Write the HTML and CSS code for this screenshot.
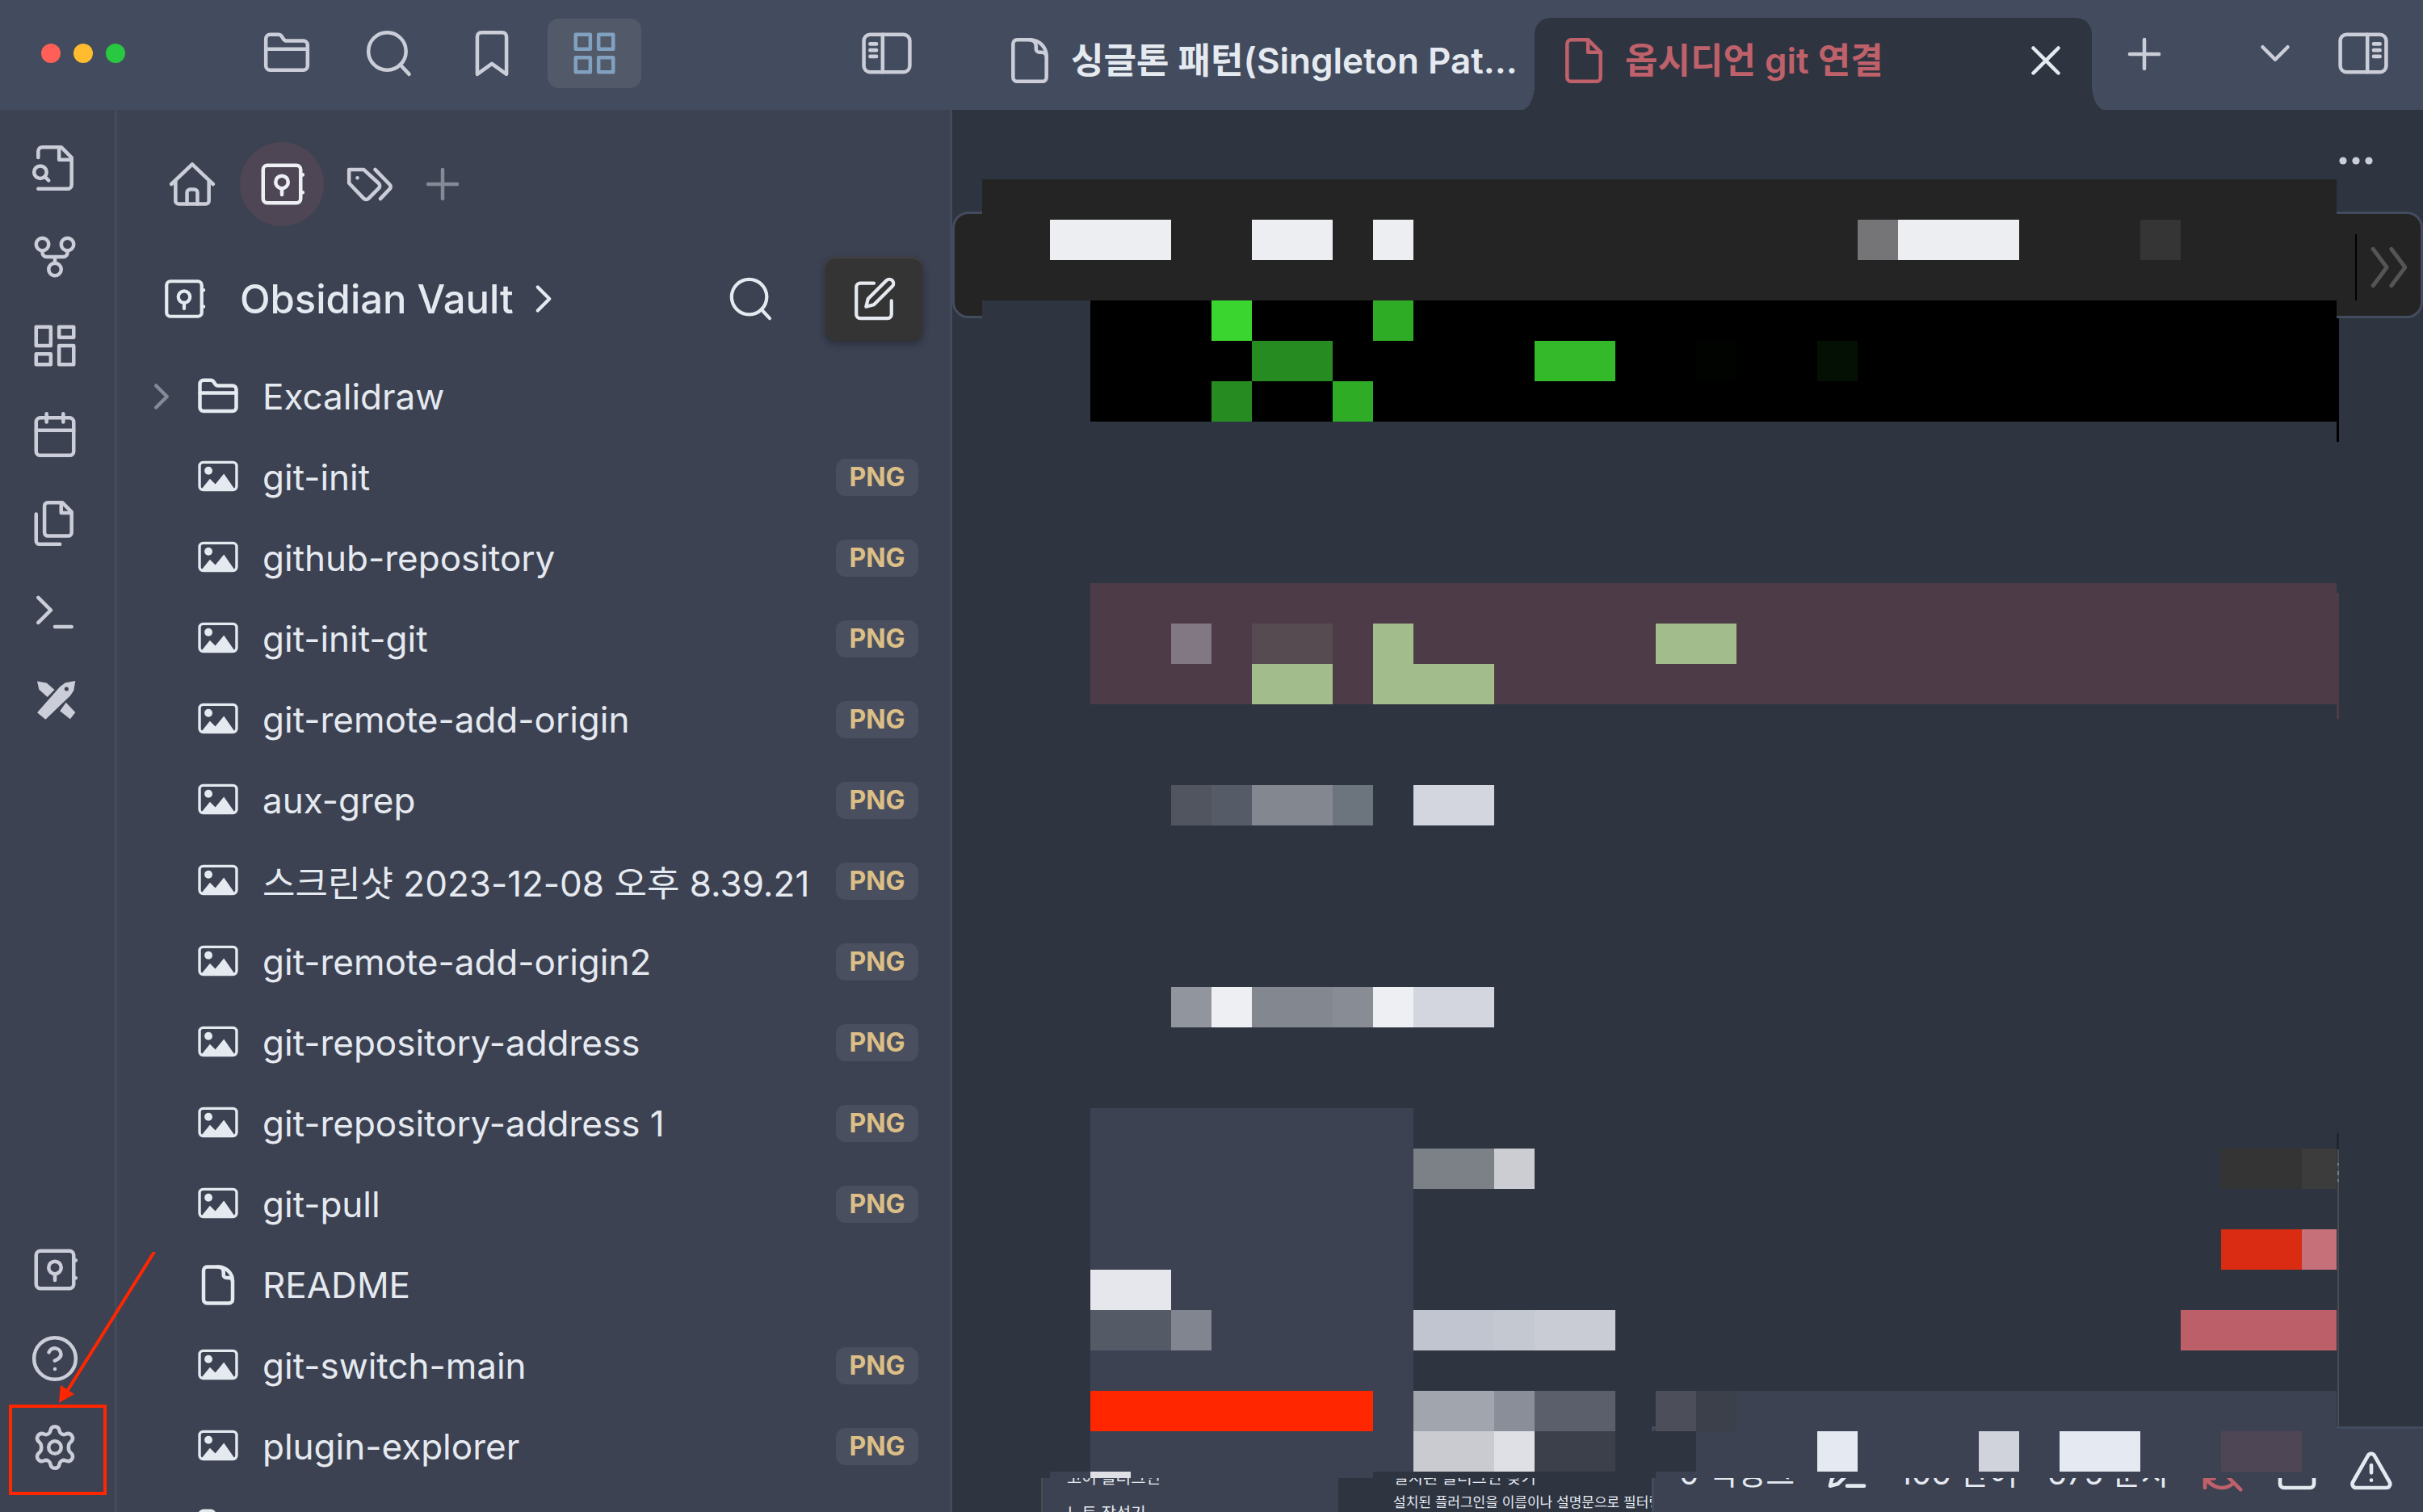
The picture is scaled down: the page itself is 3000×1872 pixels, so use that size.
FILE: index.html
```html
<!DOCTYPE html>
<html lang="ko">
    <head>
        <meta charset="utf-8">
        <meta name="viewport" content="width=device-width, initial-scale=1.0">
        <title>옵시디언 git 연결 - Obsidian Vault</title>
        <link rel="stylesheet" href="styles.css">
    </head>
    <body>
        <svg class="defs" aria-hidden="true">
            <symbol id="i-folder" viewBox="0 0 24 24"><path d="M4 20h16a2 2 0 0 0 2-2V8a2 2 0 0 0-2-2h-7.9a2 2 0 0 1-1.7-.9L9.600 3.900A2 2 0 0 0 7.900 3H4a2 2 0 0 0-2 2v13c0 1.100.9 2 2 2Z"/><path d="M2 10h20"/></symbol>
            <symbol id="i-search" viewBox="0 0 24 24"><circle cx="11" cy="11" r="9"/><path d="m21.500 22-4.300-4.600"/></symbol>
            <symbol id="i-bookmark" viewBox="0 0 24 24"><path d="m19 22-7-5-7 5V4a2 2 0 0 1 2-2h10a2 2 0 0 1 2 2z"/></symbol>
            <symbol id="i-grid" viewBox="0 0 24 24"><path d="M3 3h7v7H3zM14 3h7v7h-7zM14 14h7v7h-7zM3 14h7v7H3z"/></symbol>
            <symbol id="i-panel-left" viewBox="0 0 24 24"><rect x="1" y="3" width="22" height="18" rx="3"/><path d="M10 3v18M4 7.500h3M4 10.500h3M4 13.500h3"/></symbol>
            <symbol id="i-panel-right" viewBox="0 0 24 24"><rect x="1" y="3" width="22" height="18" rx="3"/><path d="M14 3v18M17 7.500h3M17 10.500h3M17 13.500h3"/></symbol>
            <symbol id="i-file" viewBox="0 0 24 24"><path d="M14 2H6a2 2 0 0 0-2 2v16a2 2 0 0 0 2 2h12a2 2 0 0 0 2-2V8z"/><path d="M14 2v6h6"/></symbol>
            <symbol id="i-file-round" viewBox="0 0 24 24"><path d="M12 2H6a2 2 0 0 0-2 2v16a2 2 0 0 0 2 2h12a2 2 0 0 0 2-2V10c0-4.500-3.500-8-8-8z"/><path d="M12 2c1.700 0 3 1.300 3 3v1.500c0 .8.700 1.500 1.500 1.500h1.200c1.300 0 2.300 1 2.300 2"/></symbol>
            <symbol id="i-x" viewBox="0 0 24 24"><path d="M18 6 6 18M6 6l12 12"/></symbol>
            <symbol id="i-plus" viewBox="0 0 24 24"><path d="M5 12h14M12 5v14"/></symbol>
            <symbol id="i-down" viewBox="0 0 24 24"><path d="m6 9 6 6 6-6"/></symbol>
            <symbol id="i-right" viewBox="0 0 24 24"><path d="m9 18 6-6-6-6"/></symbol>
            <symbol id="i-rights" viewBox="0 0 24 24"><path d="m5 20 6-8-6-8M13 20l6-8-6-8"/></symbol>
            <symbol id="i-more" viewBox="0 0 24 24"><g fill="currentColor" stroke="none"><circle cx="4" cy="12" r="2.300"/><circle cx="12" cy="12" r="2.300"/><circle cx="20" cy="12" r="2.300"/></g></symbol>
            <symbol id="i-file-search" viewBox="0 0 24 24"><path d="M4 22h14a2 2 0 0 0 2-2V7l-5-5H6a2 2 0 0 0-2 2v3"/><path d="M14 2v6h6"/><circle cx="5" cy="14" r="3"/><path d="m9 18-1.500-1.500"/></symbol>
            <symbol id="i-fork" viewBox="0 0 24 24"><circle cx="12" cy="18" r="3"/><circle cx="6" cy="6" r="3"/><circle cx="18" cy="6" r="3"/><path d="M18 9v1c0 1.100-.9 2-2 2H8a2 2 0 0 1-2-2V9M12 12v3"/></symbol>
            <symbol id="i-dashboard" viewBox="0 0 24 24"><path d="M3 3h7v9H3zM14 3h7v5h-7zM14 12h7v9h-7zM3 16h7v5H3z"/></symbol>
            <symbol id="i-calendar" viewBox="0 0 24 24"><rect x="3" y="4" width="18" height="18" rx="2"/><path d="M16 2v4M8 2v4M3 10h18"/></symbol>
            <symbol id="i-files" viewBox="0 0 24 24"><path d="M15.500 2H8.600a1.600 1.600 0 0 0-1.600 1.600v12.800a1.600 1.600 0 0 0 1.600 1.600h9.800a1.600 1.600 0 0 0 1.600-1.600V6.500z"/><path d="M3 7.600v12.800A1.600 1.600 0 0 0 4.600 22h9.800M15 2v5h5"/></symbol>
            <symbol id="i-terminal" viewBox="0 0 24 24"><path d="m4 17 6-6-6-6M12 19h8"/></symbol>
            <symbol id="i-excalidraw" viewBox="0 0 24 24"><g fill="currentColor" stroke="none"><path d="M3.500 2.500 8 3.300l3.800 3.300-3.400 3.500-4-3.600z"/><path d="m17.300 12.700 4.500 4.700-2.500 3.200-4.900-3.900z"/><path fill-rule="evenodd" d="M21.800 2.300 21 7l-1.600 2.400L7.500 20.800 3.500 17.500 14.500 5l2.500-1.800zM17.500 5.200a1 1 0 1 0 .1 2 1 1 0 0 0-.1-2z"/></g></symbol>
            <symbol id="i-vault" viewBox="0 0 24 24"><rect x="3" y="3" width="18" height="18" rx="2"/><circle cx="12" cy="11" r="3"/><path d="M12 14v3M21 7.500h1M21 16h1"/></symbol>
            <symbol id="i-help" viewBox="0 0 24 24"><circle cx="12" cy="12" r="10"/><path d="M9.100 9a3 3 0 0 1 5.800 1c0 2-3 3-3 3M12 17h.01"/></symbol>
            <symbol id="i-settings" viewBox="0 0 24 24"><circle cx="12" cy="12" r="3"/><path d="M9.800 4.100C10 2.900 10.800 2 12 2s2 .9 2.200 2.100c.2 1.300 1.600 2.100 2.800 1.600 1.100-.5 2.400-.4 3.200.8.700 1.200.1 2.300-.8 3.100-1.200.9-1.200 3.900 0 4.800.9.700 1.500 1.900.8 3.100-.8 1.200-2.100 1.300-3.200.8-1.200-.5-2.600.3-2.800 1.600C14 21.100 13.200 22 12 22s-2-.9-2.200-2.100c-.2-1.300-1.600-2.100-2.800-1.600-1.100.5-2.400.4-3.200-.8-.7-1.200-.1-2.400.8-3.100 1.200-.9 1.200-3.900 0-4.800-.9-.8-1.500-1.900-.8-3.100.8-1.200 2.100-1.300 3.200-.8 1.200.5 2.600-.3 2.800-1.600z"/></symbol>
            <symbol id="i-home" viewBox="0 0 24 24"><path d="M2 12 12 2.500 22 12"/><path d="M4 10.500V20a1.500 1.500 0 0 0 1.500 1.500h13A1.500 1.500 0 0 0 20 20v-9.500"/><path d="M9.500 21.500V16a1.500 1.500 0 0 1 1.500-1.500h2a1.500 1.500 0 0 1 1.500 1.500v5.500"/></symbol>
            <symbol id="i-tags" viewBox="0 0 24 24"><path d="M2 5v6.500l7 7.300c.7.700 1.700.7 2.400 0l4.800-4.800c.7-.7.700-1.700 0-2.400L9 5z"/><path d="m14.500 5 7 7.200c.6.600.6 1.500 0 2.100L17 19M6 9h.01"/></symbol>
            <symbol id="i-edit" viewBox="0 0 24 24"><path d="M12 4H5a2 2 0 0 0-2 2v14a2 2 0 0 0 2 2h14a2 2 0 0 0 2-2v-7"/><path d="M18.400 2.600a2.100 2.100 0 0 1 3 3L12 15l-4 1 1-4z"/></symbol>
            <symbol id="i-image" viewBox="0 0 24 24"><rect x="1.800" y="3.700" width="20.400" height="15.200" rx="2" stroke-width="1.500"/><circle cx="6.700" cy="8.300" r="2.200" fill="currentColor" stroke="none"/><path d="M3 18.300 7.500 12.800l3 3L15.200 10 21 18.300z" fill="currentColor" stroke="none"/></symbol>
            <symbol id="i-pen" viewBox="0 0 24 24"><path d="M12 20h9M16.500 3.500a2.100 2.100 0 0 1 3 3L7 19l-4 1 1-4z"/></symbol>
            <symbol id="i-sync-off" viewBox="0 0 24 24"><path d="M21 8 19 5.500A9 9 0 0 0 8 4M21 3v5h-5M3 12a9 9 0 0 0 15 6.700M3 16l2.500 2.500M8 16H3v5M22 22 2 2"/></symbol>
            <symbol id="i-box" viewBox="0 0 24 24"><rect x="3" y="4" width="18" height="17" rx="2"/></symbol>
            <symbol id="i-warning" viewBox="0 0 24 24"><path d="m21.700 18-8-14a2 2 0 0 0-3.500 0l-8 14A2 2 0 0 0 4 21h16a2 2 0 0 0 1.700-3zM12 9v4M12 17h.01"/></symbol>
        </svg>

        <header class="titlebar">
            <div class="titlebar-left">
                <div class="lights">
                    <button class="light red" aria-label="닫기"></button>
                    <button class="light yellow" aria-label="최소화"></button>
                    <button class="light green" aria-label="확대"></button>
                </div>
                <nav class="panels">
                    <button class="panel-btn" aria-label="파일"><svg class="icon"><use href="#i-folder"/></svg></button>
                    <button class="panel-btn" aria-label="검색"><svg class="icon"><use href="#i-search"/></svg></button>
                    <button class="panel-btn" aria-label="북마크"><svg class="icon"><use href="#i-bookmark"/></svg></button>
                    <button class="panel-btn active" aria-label="탐색기"><svg class="icon"><use href="#i-grid"/></svg></button>
                </nav>
                <button class="toggle-left" aria-label="왼쪽 사이드바"><svg class="icon"><use href="#i-panel-left"/></svg></button>
            </div>
            <div class="tabs">
                <button class="tab"><svg class="icon"><use href="#i-file-round"/></svg><span>싱글톤 패턴(Singleton Pat...</span></button>
                <div class="tab active">
                    <svg class="icon"><use href="#i-file"/></svg><span>옵시디언 git 연결</span>
                    <button class="tab-close" aria-label="탭 닫기"><svg class="icon"><use href="#i-x"/></svg></button>
                </div>
                <button class="new-tab" aria-label="새 탭"><svg class="icon"><use href="#i-plus"/></svg></button>
            </div>
            <div class="titlebar-right">
                <button aria-label="탭 목록"><svg class="icon"><use href="#i-down"/></svg></button>
                <button aria-label="오른쪽 사이드바"><svg class="icon"><use href="#i-panel-right"/></svg></button>
            </div>
        </header>

        <div class="workspace">
            <nav class="ribbon">
                <button aria-label="빠른 전환기"><svg class="icon"><use href="#i-file-search"/></svg></button>
                <button aria-label="그래프 뷰"><svg class="icon"><use href="#i-fork"/></svg></button>
                <button aria-label="캔버스"><svg class="icon"><use href="#i-dashboard"/></svg></button>
                <button aria-label="일일 노트"><svg class="icon"><use href="#i-calendar"/></svg></button>
                <button aria-label="템플릿"><svg class="icon"><use href="#i-files"/></svg></button>
                <button aria-label="명령어"><svg class="icon"><use href="#i-terminal"/></svg></button>
                <button aria-label="Excalidraw"><svg class="icon"><use href="#i-excalidraw"/></svg></button>
                <span class="grow"></span>
                <button aria-label="보관함"><svg class="icon"><use href="#i-vault"/></svg></button>
                <button aria-label="도움말"><svg class="icon"><use href="#i-help"/></svg></button>
                <button aria-label="설정"><svg class="icon"><use href="#i-settings"/></svg></button>
            </nav>

            <aside class="sidebar">
                <div class="sidebar-tabs">
                    <button aria-label="홈"><svg class="icon"><use href="#i-home"/></svg></button>
                    <button class="active" aria-label="보관함"><svg class="icon"><use href="#i-vault"/></svg></button>
                    <button aria-label="태그"><svg class="icon"><use href="#i-tags"/></svg></button>
                    <button class="dim" aria-label="추가"><svg class="icon"><use href="#i-plus"/></svg></button>
                </div>
                <div class="vault">
                    <svg class="icon"><use href="#i-vault"/></svg>
                    <button class="vault-name">Obsidian Vault<svg class="icon"><use href="#i-right"/></svg></button>
                    <button class="vault-search" aria-label="검색"><svg class="icon"><use href="#i-search"/></svg></button>
                    <button class="vault-new" aria-label="새 노트"><svg class="icon"><use href="#i-edit"/></svg></button>
                </div>
                <ul class="files">
                    <li><svg class="icon arrow"><use href="#i-right"/></svg><svg class="icon"><use href="#i-folder"/></svg><a href="#">Excalidraw</a></li>
                    <li><svg class="icon"><use href="#i-image"/></svg><a href="#">git-init</a><span class="badge">PNG</span></li>
                    <li><svg class="icon"><use href="#i-image"/></svg><a href="#">github-repository</a><span class="badge">PNG</span></li>
                    <li><svg class="icon"><use href="#i-image"/></svg><a href="#">git-init-git</a><span class="badge">PNG</span></li>
                    <li><svg class="icon"><use href="#i-image"/></svg><a href="#">git-remote-add-origin</a><span class="badge">PNG</span></li>
                    <li><svg class="icon"><use href="#i-image"/></svg><a href="#">aux-grep</a><span class="badge">PNG</span></li>
                    <li><svg class="icon"><use href="#i-image"/></svg><a href="#">스크린샷 2023-12-08 오후 8.39.21</a><span class="badge">PNG</span></li>
                    <li><svg class="icon"><use href="#i-image"/></svg><a href="#">git-remote-add-origin2</a><span class="badge">PNG</span></li>
                    <li><svg class="icon"><use href="#i-image"/></svg><a href="#">git-repository-address</a><span class="badge">PNG</span></li>
                    <li><svg class="icon"><use href="#i-image"/></svg><a href="#">git-repository-address 1</a><span class="badge">PNG</span></li>
                    <li><svg class="icon"><use href="#i-image"/></svg><a href="#">git-pull</a><span class="badge">PNG</span></li>
                    <li><svg class="icon"><use href="#i-file-round"/></svg><a href="#">README</a></li>
                    <li><svg class="icon"><use href="#i-image"/></svg><a href="#">git-switch-main</a><span class="badge">PNG</span></li>
                    <li><svg class="icon"><use href="#i-image"/></svg><a href="#">plugin-explorer</a><span class="badge">PNG</span></li>
                    <li><svg class="icon"><use href="#i-folder"/></svg></li>
                </ul>
            </aside>

            <main class="note">
                <div class="view-actions">
                    <button aria-label="더 보기"><svg class="icon"><use href="#i-more"/></svg></button>
                </div>
                <div class="toolbar">
                    <button aria-label="도구 더 보기"><svg class="icon"><use href="#i-rights"/></svg></button>
                </div>

                <!-- redacted note content, 50px blocks -->
                <svg class="mosaic" viewBox="1216 222 1677 1608" preserveAspectRatio="none" aria-hidden="true">
                    <path fill="#242424" d="M1216 222h1677v150H1216z"/>
                    <path fill="#2e3440" d="M1216 372h134v50h-134z"/>
                    <path fill="#edeef2" d="M1300 272h150v50h-150zM1550 272h100v50h-100zM1700 272h50v50h-50zM2350 272h150v50h-150z"/>
                    <path fill="#757577" d="M2300 272h50v50h-50z"/>
                    <path fill="#353535" d="M2650 272h50v50h-50z"/>

                    <path fill="#000" d="M1350 372h1543v150H1350zM2893 394h3v153h-3z"/>
                    <path fill="#3bd52f" d="M1500 372h50v50h-50z"/>
                    <path fill="#2eac26" d="M1700 372h50v50h-50zM1650 472h50v50h-50z"/>
                    <path fill="#268b20" d="M1550 422h100v50h-100zM1500 472h50v50h-50z"/>
                    <path fill="#34b92a" d="M1900 422h100v50h-100z"/>
                    <path fill="#010300" d="M2100 422h50v50h-50z"/>
                    <path fill="#051005" d="M2250 422h50v50h-50z"/>

                    <path fill="#4d3c48" d="M1350 722h1543v150H1350zM2893 734h3v156h-3z"/>
                    <path fill="#817884" d="M1450 772h50v50h-50z"/>
                    <path fill="#564b50" d="M1550 772h100v50h-100z"/>
                    <path fill="#a3bc8c" d="M1700 772h50v50h100v50h-150zM2050 772h100v50h-100zM1550 822h100v50h-100z"/>

                    <path fill="#51555f" d="M1450 972h50v50h-50z"/>
                    <path fill="#555c67" d="M1500 972h50v50h-50z"/>
                    <path fill="#83878f" d="M1550 972h100v50h-100zM1550 1222h100v50h-100z"/>
                    <path fill="#6c747e" d="M1650 972h50v50h-50z"/>
                    <path fill="#d4d6df" d="M1750 972h100v50h-100zM1750 1222h100v50h-100z"/>
                    <path fill="#91959d" d="M1450 1222h50v50h-50z"/>
                    <path fill="#eeeff3" d="M1500 1222h50v50h-50zM1700 1222h50v50h-50z"/>
                    <path fill="#888c94" d="M1650 1222h50v50h-50z"/>

                    <path fill="#3c4252" d="M1350 1372h400v450h-50v8h-400v-8h50z"/>
                    <path fill="#7b8187" d="M1750 1422h100v50h-100z"/>
                    <path fill="#cccdd2" d="M1850 1422h50v50h-50z"/>
                    <path fill="#343434" d="M2750 1422h100v50h-100z"/>
                    <path fill="#3c3c3c" d="M2850 1422h43v50h-43z"/>
                    <path fill="#d92c12" d="M2750 1522h100v50h-100z"/>
                    <path fill="#c67179" d="M2850 1522h43v50h-43z"/>
                    <path fill="#e6e7ec" d="M1350 1572h100v50h-100z"/>
                    <path fill="#555a67" d="M1350 1622h100v50h-100z"/>
                    <path fill="#80858f" d="M1450 1622h50v50h-50z"/>
                    <path fill="#c1c5cf" d="M1750 1622h100v50h-100z"/>
                    <path fill="#c4c8d1" d="M1850 1622h50v50h-50z"/>
                    <path fill="#c9ccd5" d="M1900 1622h100v50h-100z"/>
                    <path fill="#bd5f69" d="M2700 1622h193v50h-193z"/>
                    <path fill="#ff2600" d="M1350 1722h350v50h-350z"/>

                    <path fill="#2e3440" d="M1700 1822h50v-50h350v50h-50v8h-350z"/>
                    <path fill="#3c4252" d="M2150 1722h743v108h-843v-8h50v-50h50z"/>
                    <path fill="#a1a5ae" d="M1750 1722h100v50h-100z"/>
                    <path fill="#8a8e99" d="M1850 1722h50v50h-50z"/>
                    <path fill="#5a5f6b" d="M1900 1722h100v50h-100z"/>
                    <path fill="#4c4f5a" d="M2050 1722h50v50h-50z"/>
                    <path fill="#3b404b" d="M2100 1722h50v50h-50zM1900 1772h100v50h-100z"/>
                    <path fill="#c9cbd0" d="M1750 1772h100v50h-100z"/>
                    <path fill="#dfe0e6" d="M1850 1772h50v50h-50zM1350 1822h50v8h-50z"/>
                    <path fill="#e5e9f1" d="M2250 1772h50v50h-50zM2550 1772h100v50h-100z"/>
                    <path fill="#d0d3dc" d="M2450 1772h50v50h-50z"/>
                    <path fill="#4e4655" d="M2750 1772h100v50h-100z"/>
                    <path fill="#22262f" d="M2893 1403h3v20h-3z"/>
                    <path fill="#4a4c52" d="M2894 1423h2v343h-2z"/>
                    <path fill="#7b8187" d="M2894 1440h2v3h-2zM2894 1450h2v5h-2zM2894 1460h2v3h-2z"/>
                </svg>

                <div class="note-bottom">
                    <div class="embed-nav">
                        <p>코어 플러그인</p>
                        <p>노트 작성기</p>
                    </div>
                    <div class="embed-body">
                        <p>설치된 플러그인 찾기</p>
                        <p>설치된 플러그인을 이름이나 설명문으로 필터링</p>
                    </div>
                    <footer class="status">
                        <span>0 백링크</span>
                        <svg class="icon"><use href="#i-pen"/></svg>
                        <span>106 단어</span>
                        <span>675 문자</span>
                        <svg class="icon red"><use href="#i-sync-off"/></svg>
                        <svg class="icon"><use href="#i-box"/></svg>
                        <svg class="icon"><use href="#i-warning"/></svg>
                    </footer>
                </div>
            </main>
        </div>

        <!-- arrow and frame that point at the settings button -->
        <svg class="callout" viewBox="0 0 200 320" aria-hidden="true">
            <rect x="13" y="191" width="117" height="108" fill="none" stroke="#ff2600" stroke-width="4"/>
            <path d="M191 0 84 171" fill="none" stroke="#ff2600" stroke-width="4"/>
            <path d="M73 187 75 165 92 176z" fill="#ff2600"/>
        </svg>
    </body>
</html>
```
FILE: styles.css
```css
*{
    box-sizing: border-box;
}
body{
    margin:0;
    height:100vh;
    display:flex;
    flex-direction: column;
    overflow: hidden;
    position: relative;
    background-color:#3c4252;
    color:#e5e9f0;
    font-family: Inter, "Noto Sans CJK KR", sans-serif;
    font-size:44px;
}
button{
    display:flex;
    align-items: center;
    justify-content: center;
    margin:0;
    padding:0;
    border:0;
    background:none;
    color:inherit;
    font:inherit;
}
a{
    color:inherit;
    text-decoration: none;
}
.defs{
    position: absolute;
    width:0;
    height:0;
}
.icon{
    flex:none;
    width:62px;
    height:62px;
    fill:none;
    stroke:currentColor;
    stroke-width:1.75;
    stroke-linecap: round;
    stroke-linejoin: round;
}

/* title bar */
.titlebar{
    flex:none;
    display:flex;
    height:136px;
    background-color:#434c5e;
    color:#cbced8;
}
.titlebar-left{
    flex:none;
    display:flex;
    align-items: center;
    width:1179px;
    padding:0 50px 4px 51px;
}
.lights{
    display:flex;
    gap:16px;
    margin-right:142px;
}
.light{
    width:24px;
    height:24px;
    border-radius:50%;
}
.light.red{
    background-color:#ff5f57;
}
.light.yellow{
    background-color:#febc2e;
}
.light.green{
    background-color:#28c840;
}
.panels{
    display:flex;
    gap:11px;
    flex:1;
}
.panel-btn{
    width:116px;
    height:86px;
    border-radius:14px;
}
.panel-btn.active{
    background-color:#525968;
    color:#81a1c1;
}
.tabs{
    flex:1;
    display:flex;
    align-items: flex-end;
    min-width:0;
}
.tab{
    position: relative;
    display:flex;
    align-items: center;
    gap:20px;
    width:690px;
    height:114px;
    padding:0 26px 8px 30px;
    font-size:44px;
    font-weight:600;
    white-space: nowrap;
}
button.tab{
    width:721px;
    padding-left:65px;
    padding-right:0;
    justify-content: flex-start;
    color:#e5e9f0;
}
.tab span{
    flex:1;
    padding-bottom:6px;
    text-align: left;
}
button.tab .icon{
    color:#cbced8;
}
.tab.active{
    border-radius:20px 20px 0 0;
    background-color:#2e3440;
    color:#bf616a;
}
.tab.active::before,
.tab.active::after{
    content:"";
    position: absolute;
    bottom:0;
    width:16px;
    height:32px;
}
.tab.active::before{
    right:100%;
    background:radial-gradient(ellipse at 0 0, transparent 70%, #2e3440 71%);
}
.tab.active::after{
    left:100%;
    background:radial-gradient(ellipse at 100% 0, transparent 70%, #2e3440 71%);
}
.tab-close{
    width:62px;
    color:#e5e9f0;
}
.new-tab{
    width:130px;
    height:114px;
    padding-bottom:24px;
}
.titlebar-right{
    display:flex;
    gap:47px;
    padding:0 43px 4px 0;
}

/* workspace */
.workspace{
    flex:1;
    display:flex;
    min-height:0;
}
.ribbon{
    flex:none;
    display:flex;
    flex-direction: column;
    align-items: center;
    gap:48px;
    width:145px;
    padding:41px 6px 49px 0;
    border-right:3px solid #434c5e;
    color:#cbced8;
}
.grow{
    flex:1;
}
.sidebar{
    flex:none;
    width:1034px;
    border-right:3px solid #434c5e;
    overflow: hidden;
}
.sidebar-tabs{
    display:flex;
    align-items: center;
    height:104px;
    margin:40px 0 0 37px;
    color:#cbced8;
}
.sidebar-tabs button{
    width:112px;
    height:104px;
}
.sidebar-tabs .active{
    width:104px;
    margin:0 1px 0 3px;
    border-radius:50%;
    background-color:#4e4655;
    color:#eceff4;
}
.sidebar-tabs .dim{
    width:68px;
    color:#858a97;
}
.vault{
    display:flex;
    align-items: center;
    height:104px;
    margin-top:38px;
    padding:0 33px 0 54px;
}
.vault .icon{
    width:58px;
    height:58px;
}
.vault-name{
    flex:1;
    justify-content: flex-start;
    gap:8px;
    margin-left:40px;
    font-size:49px;
    font-weight:500;
}
.vault-new{
    width:122px;
    height:104px;
    margin-left:62px;
    border-radius:14px;
    background-color:#343434;
    box-shadow:0 4px 10px rgba(0,0,0,.3), inset 0 2px 2px #444;
}
.files{
    list-style: none;
    margin:19px 0 0;
    padding:0 39px 0 98px;
}
.files li{
    display:flex;
    align-items: center;
    position: relative;
    height:100px;
}
.files .icon{
    width:54px;
    height:54px;
    margin-right:28px;
    stroke-width:2;
}
.files .arrow{
    position: absolute;
    left:-70px;
    color:#858a97;
}
.files a{
    flex:1;
    white-space: nowrap;
}
.badge{
    width:102px;
    height:46px;
    border-radius:12px;
    background-color:#4a4f5f;
    color:#dcbf86;
    font-size:32px;
    font-weight:700;
    line-height:46px;
    text-align: center;
}

/* note pane */
.note{
    flex:1;
    display:flex;
    flex-direction: column;
    min-width:0;
    position: relative;
    background-color:#2e3440;
}
.view-actions{
    display:flex;
    justify-content: flex-end;
    height:126px;
    padding-right:59px;
    color:#cbced8;
}
.view-actions .icon{
    width:48px;
}
.toolbar{
    display:flex;
    justify-content: flex-end;
    align-items: center;
    height:132px;
    padding-top:6px;
    border:3px solid #434c5e;
    border-radius:20px;
    background-color:#242424;
}
.toolbar button{
    height:82px;
    width:81px;
    border-left:2px solid #000;
    color:#555;
}
.toolbar .icon{
    width:68px;
    height:68px;
}
.mosaic{
    position: absolute;
    top:86px;
    left:37px;
    width:calc(100% - 144px);
    height:1608px;
    overflow: visible;
}
.note-bottom{
    display:flex;
    align-items: flex-end;
    margin-top:auto;
    padding-left:110px;
    font-size:20px;
    line-height:24px;
}
.embed-nav,
.embed-body{
    height:42px;
    overflow: hidden;
}
.embed-nav p,
.embed-body p{
    margin:-12px 0 0;
    white-space: nowrap;
}
.embed-nav{
    flex:none;
    width:368px;
    padding-left:30px;
    border-left:2px solid #4a4c52;
    background-color:#3c4252;
}
.embed-nav p + p{
    margin-top:20px;
}
.embed-body{
    flex:none;
    width:388px;
    padding-left:68px;
}
.embed-body p + p{
    margin-top:6px;
    font-size:17px;
}
.status{
    flex:1;
    display:flex;
    align-items: center;
    justify-content: space-between;
    height:106px;
    padding:0 36px 0 31px;
    border-top:3px solid #434c5e;
    border-left:3px solid #434c5e;
    background-color:#3c4252;
    font-size:39px;
    white-space: nowrap;
}
.status span{
    padding-top:6px;
}
.status .icon{
    width:56px;
    height:56px;
    stroke-width:2;
}
.status .red{
    color:#bf616a;
}
.callout{
    position: absolute;
    left:0;
    bottom:2px;
    width:200px;
    height:320px;
    pointer-events: none;
}
```
